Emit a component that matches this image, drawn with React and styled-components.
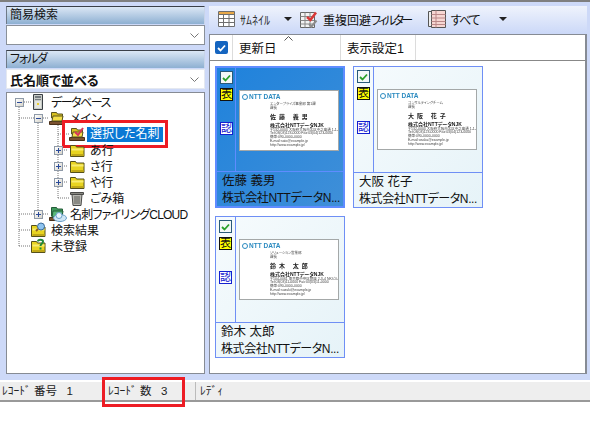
import React from "react";
import styled, { createGlobalStyle } from "styled-components";

const FONT = `"Liberation Sans", "Noto Sans CJK JP", sans-serif`;

const Global = createGlobalStyle`
  html, body { margin: 0; padding: 0; background: #fff; }
  body { font-family: ${FONT}; color: #111; font-feature-settings: "palt"; }
  * { box-sizing: border-box; }
`;

const Window = styled.div`
  width: 590px;
  height: 423px;
  overflow: hidden;
  background: #fff;
`;

const Main = styled.div`
  height: 380px;
  display: flex;
  gap: 4px;
  padding: 4px 3px 6px 6px;
  background: #cdd9f8;
  border-top: 2px solid #7f7f7f;
`;

const LeftPane = styled.div`
  width: 199px;
  display: flex;
  flex-direction: column;
`;

const PaneTitle = styled.div`
  height: 18px;
  padding-left: 3px;
  font-size: 12px;
  letter-spacing: ${(p) => (p.$small ? -1.2 : 0)}px;
  line-height: 17px;
  color: #111;
  background: linear-gradient(#dbe7f5, #8eb0d2);
  border-top: 1px solid #3a3f48;
  border-left: 1px solid #6f7a88;
  border-right: 1px solid #c8d4e8;
`;

const Combo = styled.div`
  height: 20px;
  margin-top: 1px;
  margin-bottom: ${(p) => (p.$plain ? 4 : 5)}px;
  padding: 0 5px 0 3px;
  display: flex;
  align-items: center;
  justify-content: space-between;
  background: #fff;
  border: 1px solid ${(p) => (p.$plain ? "#e4e8f0" : "#8a9099")};
  font-size: 13px;
  font-weight: 700;
`;

const Chevron = () => (
  <svg width="9" height="5" viewBox="0 0 9 5">
    <path d="M.5.5 4.500 4.500 8.500.5" fill="none" stroke="#777" />
  </svg>
);

const Tree = styled.div`
  position: relative;
  flex: 1;
  margin-top: -1px;
  padding-top: 1px;
  background: #fff;
  border: 1px solid #868b94;
`;

const TreeLines = styled.svg`
  position: absolute;
  left: -7px;
  top: -93px;
  width: 210px;
  height: 290px;
  pointer-events: none;
`;

const TreeRow = styled.div`
  position: relative;
  height: 16px;
  padding-left: ${(p) => [8, 27, 47][p.$level]}px;
  display: flex;
  align-items: center;
  font-size: 12px;
  line-height: 16px;
  letter-spacing: ${(p) => p.$tight || 0}px;
  white-space: nowrap;
`;

const Expander = styled.span`
  width: 9px;
  height: 9px;
  margin-right: 6px;
  flex: none;
  position: relative;
  visibility: ${(p) => (p.$kind ? "visible" : "hidden")};
  background: linear-gradient(135deg, #fff, #d6d3c8);
  border: 1px solid #8f9aa8;
  &::before {
    content: "";
    position: absolute;
    left: 1px;
    top: 3px;
    width: 5px;
    height: 1px;
    background: #2a4a9a;
  }
  &::after {
    content: "";
    display: ${(p) => (p.$kind === "plus" ? "block" : "none")};
    position: absolute;
    left: 3px;
    top: 1px;
    width: 1px;
    height: 5px;
    background: #2a4a9a;
  }
`;

const IconSlot = styled.span`
  width: 16px;
  height: 16px;
  margin-right: 5px;
  flex: none;
  display: flex;
  & > svg {
    flex: none;
    overflow: visible;
  }
`;

const Label = styled.span`
  padding-top: 2px;
  ${(p) =>
    p.$selected &&
    `
    background: #0a78d4;
    color: #fff;
    margin-left: -3px;
    padding: 0 3px;
    line-height: 15px;
  `}
`;

const RedBox = styled.div`
  position: absolute;
  border: 3px solid #ed1c24;
  pointer-events: none;
`;

const TreeMark = styled(RedBox)`
  left: 55px;
  top: -6px;
  width: 106px;
  height: 28px;
`;

const Folder = ({ open, children }) => (
  <svg width="16" height="16" viewBox="0 0 16 16">
    {open ? (
      <>
        <path d="M2.500 8V2.500h5l1 1.500h5V9z" fill="#d8c020" stroke="#5a5420" />
        <path d="M.5 11.500h15v3H.5z" fill="#7a5130" stroke="#4a3018" />
        <path d="M3 11 4 6h10l-1 5z" fill="#f4e04a" stroke="#5a5420" />
      </>
    ) : (
      <>
        <path d="M1.500 14.500v-11h5l1 1.500h7.500v9.500z" fill="#e8d420" stroke="#55501c" />
        <path d="M2.500 6.500h12v2h-12z" fill="#f8ec70" />
        <path d="M2.500 12h12v2h-12z" fill="#c0a818" />
      </>
    )}
    {children}
  </svg>
);

const Server = () => (
  <svg width="16" height="16" viewBox="0 0 16 16">
    <path d="M3.500.5h9v15h-9z" fill="#c8ccc8" stroke="#3a3f44" />
    <path d="M5 2h6v2H5zM5 5h6v1H5z" fill="#767c80" />
    <path d="M5 7h6v7H5z" fill="#e4e6e0" />
    <path d="M7 9h2v2H7z" fill="#e8cc30" />
  </svg>
);

const Trash = () => (
  <svg width="16" height="16" viewBox="0 0 16 16">
    <path d="M1.500 2.500h13v2h-13z" fill="#8a8a84" stroke="#4a4a48" />
    <path d="M3 4.500h10l-1 11H4z" fill="#b8b8b2" stroke="#4a4a48" />
    <path d="M6 6v8M8 6v8M10 6v8" stroke="#5c5c58" />
  </svg>
);

const CloudFolder = () => (
  <svg width="18" height="16" viewBox="0 0 18 16">
    <path d="M2.500 10V1.500h5l1 1.500h5V10z" fill="#3f9a5c" stroke="#245c38" />
    <path d="M.5 11.500h12v3H.5z" fill="#7a5130" stroke="#4a3018" />
    <path d="M3 11 4 5h10l-1 6z" fill="#58b878" stroke="#245c38" />
    <ellipse cx="11" cy="12" rx="6.500" ry="3.500" fill="#cfe6f6" stroke="#6aa0c8" />
    <circle cx="10" cy="9.500" r="3" fill="#e8f4fc" stroke="#6aa0c8" />
  </svg>
);

const TREE = [
  { level: 0, text: "データベース", exp: "minus", icon: <Server />, tight: -1.5 },
  { level: 1, text: "メイン", exp: "minus", icon: <Folder open /> },
  {
    level: 2,
    text: "選択した名刺",
    selected: true,
    icon: (
      <Folder open>
        <path d="M6 6l3 3 5-7" fill="none" stroke="#d8365a" strokeWidth="2" />
      </Folder>
    ),
  },
  { level: 2, text: "あ行", exp: "plus", icon: <Folder /> },
  { level: 2, text: "さ行", exp: "plus", icon: <Folder /> },
  { level: 2, text: "や行", exp: "plus", icon: <Folder /> },
  { level: 2, text: "ごみ箱", icon: <Trash /> },
  { level: 1, text: "名刺ファイリングCLOUD", exp: "plus", icon: <CloudFolder />, tight: -0.8 },
  {
    level: 0,
    text: "検索結果",
    icon: (
      <Folder>
        <circle cx="11" cy="4.500" r="3.500" fill="#8ec4f0" stroke="#3a6a9a" />
        <path d="M8 7l-2 2" stroke="#8a6020" strokeWidth="2" />
      </Folder>
    ),
  },
  {
    level: 0,
    text: "未登録",
    icon: (
      <Folder>
        <path
          d="M8 3.500C8 1 13 1 13 3.500 13 6 10.500 5.500 10.500 8M10.500 9.500v2"
          fill="none"
          stroke="#1f8a3a"
          strokeWidth="2"
        />
      </Folder>
    ),
  },
];

const RightPane = styled.div`
  flex: 1;
  display: flex;
  flex-direction: column;
`;

const Toolbar = styled.div`
  height: 28px;
  flex: none;
  display: flex;
  align-items: center;
  padding: 0 0 2px 9px;
  background: linear-gradient(#eff3fc, #cbd8f8);
  font-size: 12px;
  white-space: nowrap;
`;

const ToolIcon = styled.span`
  display: flex;
  margin-left: ${(p) => p.$gap || 0}px;
  margin-right: 5px;
`;

const ThumbLabel = styled.span`
  width: 30px;
  color: #333;
  font-feature-settings: normal;
`;

const Kana = styled.span`
  letter-spacing: ${(p) => p.$tight}px;
`;

const Arrow = styled.span`
  width: 0;
  height: 0;
  margin-left: ${(p) => p.$gap}px;
  border-left: 4px solid transparent;
  border-right: 4px solid transparent;
  border-top: 4px solid #222;
`;

const List = styled.div`
  flex: 1;
  display: flex;
  flex-direction: column;
  background: #fff;
  border: 1px solid #868b94;
  border-right-width: 2px;
`;

const ListHeader = styled.div`
  height: 26px;
  display: flex;
  flex: none;
  border-bottom: 1px solid #888;
  font-size: 12.500px;
`;

const HeadCell = styled.div`
  position: relative;
  width: ${(p) => p.$w}px;
  display: flex;
  align-items: center;
  padding-left: ${(p) => p.$pad}px;
  border-right: 1px solid #dcdcdc;
`;

const CheckAll = styled.span`
  width: 13px;
  height: 13px;
  display: flex;
  align-items: center;
  justify-content: center;
  background: #1565c0;
  border-radius: 2px;
`;

const SortCaret = styled.svg`
  position: absolute;
  left: 51px;
  top: 1px;
`;

const Cards = styled.div`
  flex: 1;
  display: flex;
  flex-wrap: wrap;
  align-content: flex-start;
  gap: 8px;
  padding: 5px 0 0 5px;
`;

const Card = styled.div`
  width: 130px;
  height: 142px;
  display: flex;
  flex-direction: column;
  border: ${(p) => (p.$active ? "2px solid #5f8cff" : "1px solid #6f8ff5")};
  background: ${(p) =>
    p.$active
      ? "linear-gradient(135deg, #1f82dc, #3f8fd8)"
      : "linear-gradient(135deg, #f6fbfd, #e6f3f8)"};
`;

const CardTop = styled.div`
  flex: 1;
  display: flex;
  min-height: 0;
`;

const Badges = styled.div`
  width: ${(p) => (p.$active ? 19 : 20)}px;
  flex: none;
  padding: 3px 0 0 3px;
  display: flex;
  flex-direction: column;
  align-items: flex-start;
  border-right: 1px solid ${(p) => (p.$active ? "#5f8cff" : "#6f8ff5")};
`;

const CheckBadge = styled.span`
  width: 13px;
  height: 13px;
  display: flex;
  align-items: center;
  justify-content: center;
  background: #f4f8f8;
  border: 1px solid #2a5a78;
`;

const Badge = styled.span`
  width: 13px;
  height: 13px;
  display: flex;
  align-items: center;
  justify-content: center;
  font-size: 11px;
  line-height: 1;
  margin-top: ${(p) => p.$top}px;
  background: ${(p) => (p.$yellow ? "#ffff00" : "#fff")};
  color: ${(p) => (p.$yellow ? "#111" : "#1420d0")};
  border: 1px solid ${(p) => (p.$yellow ? "#111" : "#1420d0")};
`;

const Preview = styled.div`
  flex: 1;
  padding: 22px 0 0 3px;
`;

const BizCard = styled.div`
  width: 100px;
  height: 61px;
  padding: 2px 0 0 2px;
  background: #fff;
  border: 1px solid #a4a8a8;
  color: #222;
  overflow: hidden;
  filter: blur(0.25px);
`;

const BizLogo = styled.div`
  display: flex;
  align-items: center;
  gap: 1px;
  height: 7px;
  font-size: 6.500px;
  font-weight: 700;
  color: #2a8ac0;
  & > i {
    width: 6px;
    height: 6px;
    border: 1.500px solid #2a8ac0;
    border-radius: 50%;
  }
`;

const BizBody = styled.div`
  padding: 3px 0 0 28px;
  white-space: nowrap;
`;

const BizSmall = styled.div`
  font-size: 3.500px;
  line-height: 3.800px;
  color: #444;
`;

const BizName = styled.div`
  font-size: 6px;
  line-height: 8px;
  font-weight: 700;
  letter-spacing: 3px;
  margin: 2px 0 1px;
`;

const BizCompany = styled.div`
  font-size: 5px;
  line-height: 7px;
  font-weight: 700;
`;

const CardText = styled.div`
  height: 35px;
  flex: none;
  padding: 1px 0 0 5px;
  border-top: 1px solid ${(p) => (p.$active ? "#5f8cff" : "#6f8ff5")};
  font-size: 12.500px;
  line-height: 17px;
  color: #111;
  white-space: nowrap;
`;

const CompanyLine = styled.div`
  font-size: 12px;
  letter-spacing: -0.4px;
`;

const StatusBar = styled.div`
  position: relative;
  height: 22px;
  display: flex;
  align-items: center;
  background: #eeeeee;
  border-top: 2px solid #fff;
  border-bottom: 2px solid #999;
  font-size: 11.500px;
  color: #222;
  white-space: nowrap;
`;

const StatusCell = styled.div`
  width: ${(p) => p.$w}px;
  padding-left: ${(p) => p.$pad}px;
  ${(p) => p.$sep && "border-left: 1px solid #bbb;"}
  line-height: 18px;
`;

const StatusMark = styled(RedBox)`
  left: 102px;
  top: -5px;
  width: 83px;
  height: 30px;
`;

const GridIcon = () => (
  <svg width="17" height="16" viewBox="0 0 17 16">
    <path d="M.5.5h16v15H.5z" fill="#fff" stroke="#6e6e6e" />
    <path d="M1 1h15v2.500H1z" fill="#e8a848" />
    <path d="M.5 3.500h16M.5 7.500h16M.5 11.500h16M5.500 3.500v12M11 3.500v12" stroke="#6e6e6e" fill="none" />
  </svg>
);

const FilterIcon = () => (
  <svg width="18" height="17" viewBox="0 0 18 17">
    <path d="M.5 1.500h14v15H.5z" fill="#f2f2f2" stroke="#666" />
    <path d="M.5 5.500h14M.5 9.500h14M.5 13h14M5 1.500v15M10 1.500v15" stroke="#888" fill="none" />
    <path d="M7 6l3.500 3L16 1.500" fill="none" stroke="#d83838" strokeWidth="2.500" />
    <path d="M9 13l2.500 2.500 5-6" fill="none" stroke="#8c8c8c" strokeWidth="2" />
  </svg>
);

const AllIcon = () => (
  <svg width="18" height="18" viewBox="0 0 18 18">
    <path d="M.5 1.500h3v15h-3z" fill="#eee" stroke="#555" />
    <path d="M3.500.5h14v17h-14z" fill="#f6d6d2" stroke="#555" />
    <path d="M3.500 4.500h14M3.500 8h14M3.500 11.500h14M3.500 14.500h14M8 .5v17" stroke="#b88" fill="none" />
  </svg>
);

const Tick = ({ color }) => (
  <svg width="9" height="8" viewBox="0 0 9 8">
    <path d="M1 4l2.500 2.500L8 1.500" fill="none" stroke={color} strokeWidth="1.800" />
  </svg>
);

const CARDS = [
  {
    name: "佐藤 義男",
    dept: "エンタープライズ事業部 第1課",
    active: true,
    lines: ["〒132-0004 大阪府大阪市北区中之島通 1-1-1", "Tel:03(03)123-0000  Fax:03(04)123-0000", "携帯:090-0000-0000", "E-mail:sato@example.jp", "http://www.example.jp/"],
  },
  {
    name: "大阪 花子",
    dept: "コンサルティングチーム",
    lines: ["〒132-0004 大阪府大阪市北区中之島通 1-1-1", "Tel:03(03)123-0000  Fax:03(04)123-0000", "携帯:090-0000-0000", "E-mail:osaka@example.jp", "http://www.example.jp/"],
  },
  {
    name: "鈴木 太郎",
    dept: "ソリューション営業部",
    lines: ["〒104-0061 東京都中央区銀座 2-3-4 NKビル", "Tel:03(03)11-0000  Fax:03(03)11-0000", "携帯:090-0000-0000", "E-mail:suzuki@example.jp", "http://www.example.jp/"],
  },
];

export default function App() {
  return (
    <Window>
      <Global />
      <Main>
        <LeftPane>
          <PaneTitle>簡易検索</PaneTitle>
          <Combo>
            <span />
            <Chevron />
          </Combo>
          <PaneTitle $small>フォルダ</PaneTitle>
          <Combo $plain>
            氏名順で並べる
            <Chevron />
          </Combo>
          <Tree>
            <TreeLines viewBox="0 0 210 290">
              <path
                d="M19 107V246M19 230H30M19 246H30M24 102H32M19 118H34M43 118H49M38 123V214M19 214H34M43 214H49M58 125V198M58 134H69M62 150H68M62 166H68M62 182H68M58 198H70"
                fill="none"
                stroke="#777"
                strokeDasharray="1 1"
              />
            </TreeLines>
            {TREE.map((row) => (
              <TreeRow key={row.text} $level={row.level} $tight={row.tight}>
                <Expander $kind={row.exp} />
                <IconSlot>{row.icon}</IconSlot>
                <Label $selected={row.selected}>{row.text}</Label>
                {row.selected && <TreeMark />}
              </TreeRow>
            ))}
          </Tree>
        </LeftPane>
        <RightPane>
          <Toolbar>
            <ToolIcon>
              <GridIcon />
            </ToolIcon>
            <ThumbLabel>ｻﾑﾈｲﾙ</ThumbLabel>
            <Arrow $gap={14} />
            <ToolIcon $gap={8}>
              <FilterIcon />
            </ToolIcon>
            重複回避<Kana $tight={-2.6}>フィルター</Kana>
            <ToolIcon $gap={17}>
              <AllIcon />
            </ToolIcon>
            <Kana $tight={-1.5}>すべて</Kana>
            <Arrow $gap={20} />
          </Toolbar>
          <List>
            <ListHeader>
              <HeadCell $w={23} $pad={5}>
                <CheckAll>
                  <Tick color="#fff" />
                </CheckAll>
              </HeadCell>
              <HeadCell $w={108} $pad={6}>
                更新日
                <SortCaret width="9" height="5" viewBox="0 0 9 5">
                  <path d="M.5 4.500 4.500.5 8.500 4.500" fill="none" stroke="#555" />
                </SortCaret>
              </HeadCell>
              <HeadCell $w={75} $pad={6}>
                表示設定1
              </HeadCell>
            </ListHeader>
            <Cards>
              {CARDS.map((c) => (
                <Card key={c.name} $active={c.active}>
                  <CardTop>
                    <Badges $active={c.active}>
                      <CheckBadge>
                        <Tick color="#2aa02a" />
                      </CheckBadge>
                      <Badge $yellow $top={4}>
                        表
                      </Badge>
                      <Badge $top={21}>認</Badge>
                    </Badges>
                    <Preview>
                      <BizCard>
                        <BizLogo>
                          <i />
                          NTT DATA
                        </BizLogo>
                        <BizBody>
                          <BizSmall>{c.dept}</BizSmall>
                          <BizSmall>課長</BizSmall>
                          <BizName>{c.name}</BizName>
                          <BizCompany>株式会社NTTデータNJK</BizCompany>
                          {c.lines.map((l) => (
                            <BizSmall key={l}>{l}</BizSmall>
                          ))}
                        </BizBody>
                      </BizCard>
                    </Preview>
                  </CardTop>
                  <CardText $active={c.active}>
                    <div>{c.name}</div>
                    <CompanyLine>株式会社NTTデータN...</CompanyLine>
                  </CardText>
                </Card>
              ))}
            </Cards>
          </List>
        </RightPane>
      </Main>
      <StatusBar>
        <StatusCell $w={107} $pad={2}>
          ﾚｺｰﾄﾞ 番号&nbsp;&nbsp;&nbsp;1
        </StatusCell>
        <StatusCell $w={88} $pad={1}>
          ﾚｺｰﾄﾞ 数&nbsp;&nbsp;&nbsp;3
        </StatusCell>
        <StatusCell $w={100} $pad={4} $sep>
          ﾚﾃﾞｨ
        </StatusCell>
        <StatusMark />
      </StatusBar>
    </Window>
  );
}
